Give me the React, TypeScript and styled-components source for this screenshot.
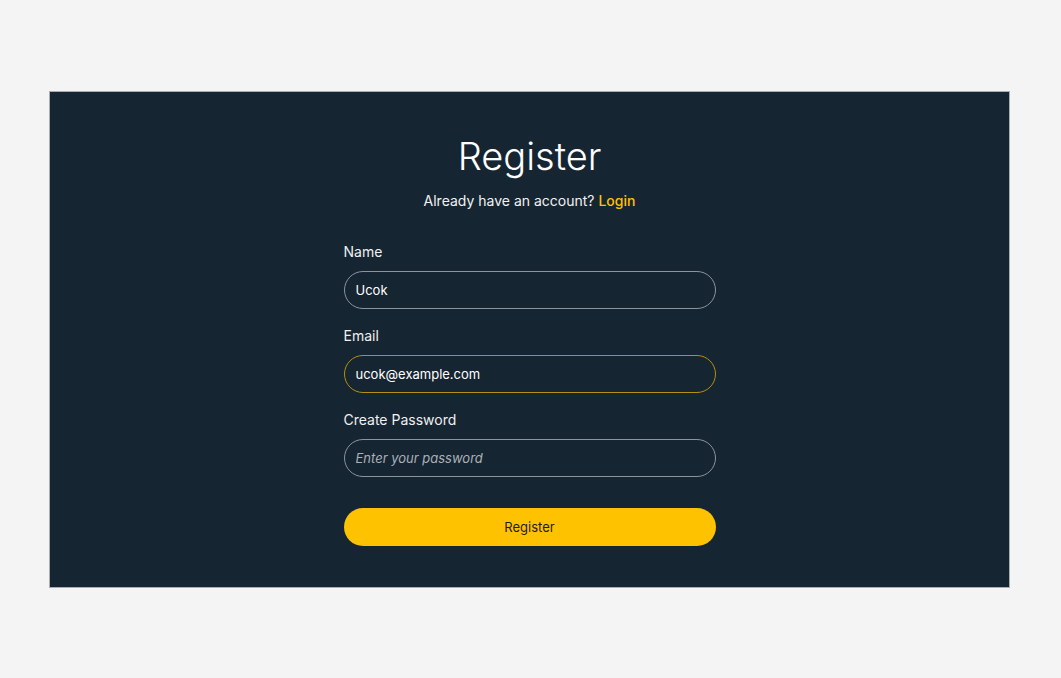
import React from "react";
import styled, { createGlobalStyle } from "styled-components";

const GlobalStyle = createGlobalStyle`
  html, body {
    margin: 0;
    padding: 0;
    background: #f4f4f4;
  }
  body {
    font-family: "Inter", "Noto Sans", sans-serif;
  }
  * { box-sizing: border-box; }
`;

const Page = styled.div`
  width: 1061px;
  height: 678px;
  padding: 91px 0 0 49px;
`;

const Card = styled.div`
  width: 961px;
  height: 497px;
  background: #162532;
  border: 1px solid #a9adb1;
  display: flex;
  flex-direction: column;
  align-items: center;
  padding-top: 38px;
`;

const Title = styled.h1`
  margin: 0;
  font-family: "Inter", sans-serif;
  font-weight: 300;
  font-size: 38px;
  line-height: 52px;
  color: #ffffff;
`;

const Subtitle = styled.p`
  margin: 9px 0 0;
  font-size: 14px;
  line-height: 20px;
  color: #f2f2f2;
`;

const LinkText = styled.a`
  color: #ffc200;
  font-weight: 500;
  text-decoration: none;
`;

const Form = styled.form`
  width: 372px;
  display: flex;
  flex-direction: column;
  margin-top: 31px;
`;

const Field = styled.div<{ $last?: boolean }>`
  display: flex;
  flex-direction: column;
  gap: 9px;
  margin-bottom: ${(p) => (p.$last ? "0" : "17px")};
`;

const Label = styled.label`
  font-size: 14px;
  line-height: 20px;
  color: #f0f0f0;
`;

const Input = styled.input<{ $active?: boolean }>`
  width: 100%;
  height: 38px;
  border-radius: 19px;
  border: 1px solid ${(p) => (p.$active ? "#b58f0f" : "#8b949c")};
  background: #162532;
  color: #ffffff;
  font-family: "Inter", sans-serif;
  font-size: 13px;
  padding: 0 11px;
  outline: none;
  &::placeholder {
    color: #aab1b8;
    font-style: italic;
  }
`;

const Button = styled.button`
  margin-top: 31px;
  width: 100%;
  height: 38px;
  border: none;
  border-radius: 19px;
  background: #ffc200;
  color: #1d1d1d;
  font-family: "Inter", sans-serif;
  font-size: 13px;
  cursor: pointer;
`;

export default function App() {
  return (
    <>
      <GlobalStyle />
      <Page>
        <Card>
          <Title>Register</Title>
          <Subtitle>
            Already have an account? <LinkText href="#">Login</LinkText>
          </Subtitle>
          <Form onSubmit={(e) => e.preventDefault()}>
            <Field>
              <Label>Name</Label>
              <Input defaultValue="Ucok" />
            </Field>
            <Field>
              <Label>Email</Label>
              <Input $active defaultValue="ucok@example.com" />
            </Field>
            <Field $last>
              <Label>Create Password</Label>
              <Input type="password" placeholder="Enter your password" />
            </Field>
            <Button type="submit">Register</Button>
          </Form>
        </Card>
      </Page>
    </>
  );
}
